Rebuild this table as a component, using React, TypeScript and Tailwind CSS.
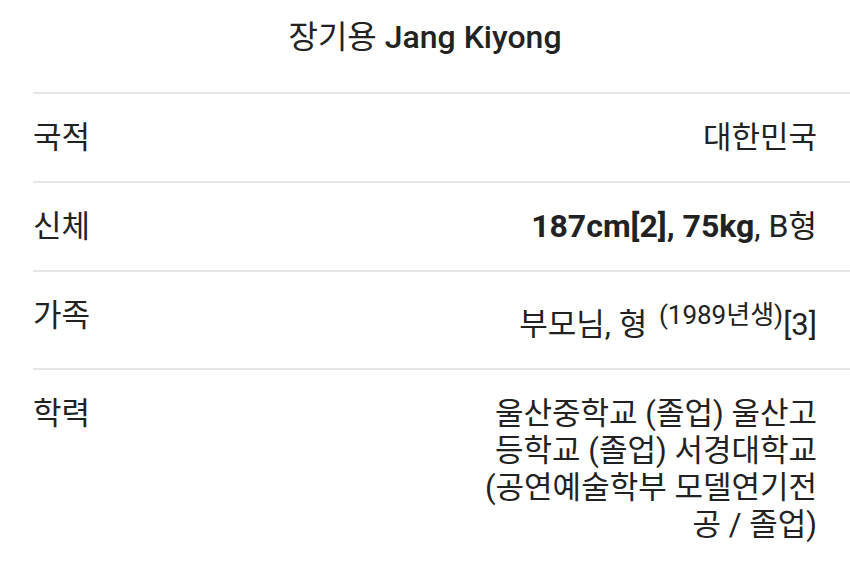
const font = "font-['Roboto','Noto_Sans_CJK_KR',sans-serif]";

const rows = [
  { label: "국적", value: <>대한민국</> },
  {
    label: "신체",
    value: (
      <>
        <b className="text-[32px] font-bold">187cm[2], 75kg</b>
        <span className="text-[32px]">, B</span>형
      </>
    ),
  },
  {
    label: "가족",
    value: (
      <>
        부모님, 형 <span className="ml-[4px] align-super text-[26px]">(1989년생)</span>[3]
      </>
    ),
  },
  {
    label: "학력",
    value: (
      <>
        울산중학교 (졸업) 울산고
        <br />
        등학교 (졸업) 서경대학교
        <br />
        (공연예술학부 모델연기전
        <br />공 / 졸업)
      </>
    ),
  },
];

export default function App() {
  return (
    <div className={`h-[570px] w-[850px] overflow-hidden bg-white pl-[33px] text-[#222] ${font}`}>
      <div className="flex h-[92px] items-center justify-center pb-[18px] pr-[33px] text-[32px] leading-none">
        <span>
          장기용 <span className="font-medium">Jang Kiyong</span>
        </span>
      </div>
      {rows.map((r) => (
        <div
          key={r.label}
          className="flex items-start justify-between border-t-2 border-[#e6e6e6] py-[25px] pr-[33px] text-[31px] leading-[37px]"
        >
          <div>{r.label}</div>
          <div className="w-[345px] text-right">{r.value}</div>
        </div>
      ))}
    </div>
  );
}
